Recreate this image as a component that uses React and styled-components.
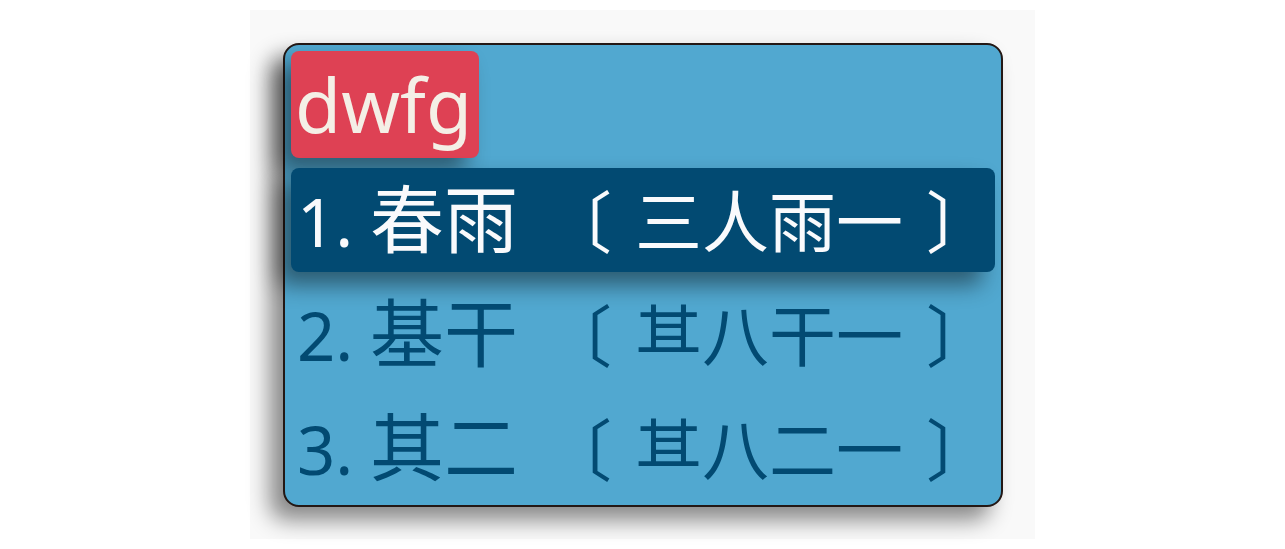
import React from "react";
import styled, { createGlobalStyle, css } from "styled-components";

const GlobalStyle = createGlobalStyle`
  * { box-sizing: border-box; }
  body { margin: 0; background: #fff; }
`;

const shadow = css`box-shadow: -13px 13px 22px rgba(0, 0, 0, 0.46);`;

const Page = styled.main`
  display: flex;
  justify-content: center;
  padding: 10px;
  font-family: "Noto Sans", "Noto Sans CJK SC", sans-serif;
`;

const Stage = styled.section`
  width: 100%;
  max-width: 785px;
  padding: 33px 32px 32px 33px;
  background: #f9f9f9;
`;

const Panel = styled.div`
  display: flex;
  flex-direction: column;
  align-items: flex-start;
  gap: 10px;
  padding: 6px 6px 5px;
  border: 2px solid #231815;
  border-radius: 16px;
  background: #51a8d0;
  ${shadow}
`;

const Preedit = styled.output`
  padding: 0 7px 0 4px;
  border-radius: 8px;
  background: #de4154;
  color: #f4efe6;
  font-size: 75px;
  line-height: 107px;
  ${shadow}
`;

const Candidates = styled.ol`
  display: flex;
  flex-direction: column;
  gap: 10px;
  width: 100%;
  margin: 0;
  padding: 0;
  list-style: none;
`;

const Candidate = styled.button`
  display: flex;
  align-items: baseline;
  width: 100%;
  height: 104px;
  padding: 0 6px 2px;
  border: 0;
  border-radius: 8px;
  background: ${(p) => (p.$selected ? "#024a72" : "transparent")};
  color: ${(p) => (p.$selected ? "#f9fafc" : "#024a72")};
  font-family: inherit;
  font-size: 74px;
  line-height: 102px;
  text-align: left;
  white-space: nowrap;
  ${(p) => p.$selected && shadow}
`;

const Index = styled.span`
  flex: 0 0 73px;
  font-size: 67px;
`;

const Word = styled.span`
  flex: 0 0 175px;
`;

const Parts = styled.span`
  display: flex;
  align-items: baseline;
  gap: 23px;
  font-size: 67px;
`;

/* The upper component of 其: the two legs are clipped away. */
const UpperPart = styled.span`
  display: inline-block;
  font-family: "Noto Sans CJK SC", sans-serif;
  line-height: 67px;
  clip-path: inset(0 0 13px 0);
`;

const items = [
  { word: "春雨", parts: "三人雨一" },
  { word: "基干", upper: "其", parts: "八干一" },
  { word: "其二", upper: "其", parts: "八二一" },
];

export default function App() {
  return (
    <Page>
      <GlobalStyle />
      <Stage>
        <Panel>
          <Preedit>dwfg</Preedit>
          <Candidates>
            {items.map((item, i) => (
              <li key={item.word}>
                <Candidate type="button" $selected={i === 0}>
                  <Index>{i + 1}.</Index>
                  <Word>{item.word}</Word>
                  <Parts>
                    <span>〔</span>
                    <span>
                      {item.upper && <UpperPart>{item.upper}</UpperPart>}
                      {item.parts}
                    </span>
                    <span>〕</span>
                  </Parts>
                </Candidate>
              </li>
            ))}
          </Candidates>
        </Panel>
      </Stage>
    </Page>
  );
}
